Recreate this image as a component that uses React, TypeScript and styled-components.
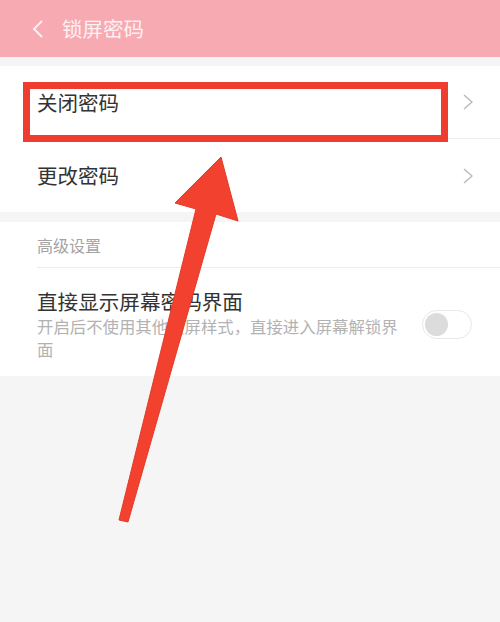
import React from "react";
import styled, { createGlobalStyle } from "styled-components";

const Global = createGlobalStyle`
  html, body { margin: 0; padding: 0; background: #f5f5f5; }
  body { font-family: "Noto Sans CJK SC", "Noto Sans", sans-serif; }
  * { box-sizing: border-box; }
`;

const Page = styled.div`
  position: relative;
  width: 500px;
  height: 622px;
  background: #f5f5f5;
  overflow: hidden;
`;

const Header = styled.div`
  height: 57px;
  background: #f8aab2;
  display: flex;
  align-items: center;
  padding-left: 32px;
  gap: 19px;
  color: #fdf0f2;
`;

const HeaderTitle = styled.div`
  font-size: 20.5px;
  line-height: 1;
`;

const Gap = styled.div<{ $h: number }>`
  height: ${(p) => p.$h}px;
`;

const Section = styled.div`
  background: #fff;
  display: flex;
  flex-direction: column;
`;

const NavRow = styled.div<{ $divider?: boolean }>`
  height: 73px;
  margin-left: 37px;
  padding-right: 27px;
  display: flex;
  align-items: center;
  justify-content: space-between;
  border-bottom: ${(p) => (p.$divider ? "1px solid #ececec" : "none")};
`;

const RowLabel = styled.div`
  font-size: 20.5px;
  color: #333;
  line-height: 1;
`;

const GroupTitle = styled.div`
  height: 46px;
  margin-left: 37px;
  border-bottom: 1px solid #ececec;
  display: flex;
  align-items: center;
  font-size: 16px;
  color: #a4a4a4;
`;

const SwitchRow = styled.div`
  margin-left: 37px;
  padding: 19px 28px 15px 0;
  display: flex;
  align-items: center;
  justify-content: space-between;
`;

const SwitchText = styled.div`
  display: flex;
  flex-direction: column;
  width: 366px;
`;

const SwitchTitle = styled.div`
  font-size: 20.6px;
  line-height: 28px;
  color: #333;
`;

const SwitchDesc = styled.div`
  font-size: 16.4px;
  line-height: 23px;
  color: #b2b2b2;
`;

const Toggle = styled.div`
  width: 50px;
  height: 29px;
  border-radius: 15px;
  border: 1px solid #e8e8e8;
  background: #fff;
  display: flex;
  align-items: center;
  padding-left: 2px;
`;

const Knob = styled.div`
  width: 23px;
  height: 23px;
  border-radius: 50%;
  background: #dcdcdc;
`;

const Highlight = styled.div`
  position: absolute;
  left: 23px;
  top: 82px;
  width: 425px;
  height: 60px;
  border: 7px solid #ee3c2e;
`;

const ArrowLayer = styled.svg`
  position: absolute;
  left: 0;
  top: 0;
  pointer-events: none;
`;

const Chevron = ({ color, w, h }: { color: string; w: number; h: number }) => (
  <svg width={w} height={h} viewBox={`0 0 ${w} ${h}`}>
    <polyline
      points={`1,1 ${w - 1},${h / 2} 1,${h - 1}`}
      fill="none"
      stroke={color}
      strokeWidth="1.4"
      strokeLinejoin="miter"
    />
  </svg>
);

const BackChevron = () => (
  <svg width={11} height={18} viewBox="0 0 11 18">
    <polyline points="10,1 2,9 10,17" fill="none" stroke="#fdf0f2" strokeWidth="2" />
  </svg>
);

export default function App() {
  return (
    <Page>
      <Global />
      <Header>
        <BackChevron />
        <HeaderTitle>锁屏密码</HeaderTitle>
      </Header>
      <Gap $h={9} />
      <Section>
        <NavRow $divider>
          <RowLabel>关闭密码</RowLabel>
          <Chevron color="#b8b8b8" w={10} h={16} />
        </NavRow>
        <NavRow>
          <RowLabel>更改密码</RowLabel>
          <Chevron color="#b8b8b8" w={10} h={16} />
        </NavRow>
      </Section>
      <Gap $h={10} />
      <Section>
        <GroupTitle>高级设置</GroupTitle>
        <SwitchRow>
          <SwitchText>
            <SwitchTitle>直接显示屏幕密码界面</SwitchTitle>
            <SwitchDesc>开启后不使用其他锁屏样式，直接进入屏幕解锁界面</SwitchDesc>
          </SwitchText>
          <Toggle>
            <Knob />
          </Toggle>
        </SwitchRow>
      </Section>
      <Highlight />
      <ArrowLayer width={500} height={622} viewBox="0 0 500 622">
        <polygon
          points="221,157 238,221 216,214 128,522 119,520 196,209 175,203"
          fill="#f2412e"
          stroke="#e53a28"
          strokeWidth="1"
          strokeLinejoin="round"
        />
      </ArrowLayer>
    </Page>
  );
}
